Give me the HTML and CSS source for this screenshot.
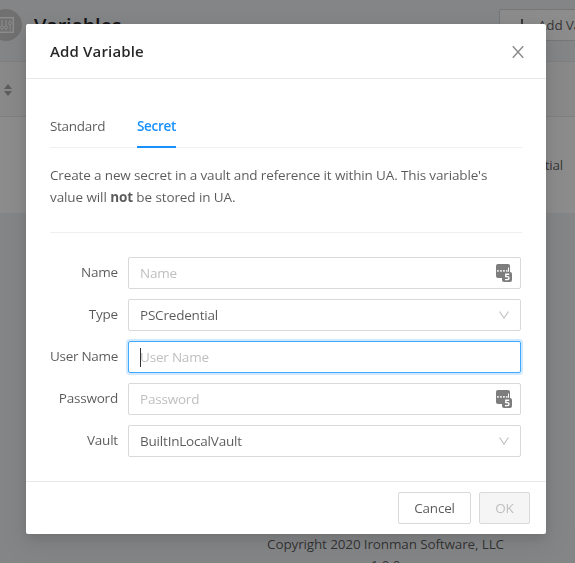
FILE: index.html
```html
<!DOCTYPE html>
<html lang="en">
<head>
<meta charset="utf-8">
<title>Variables</title>
<link rel="stylesheet" href="styles.css">
</head>
<body>
<div class="page">
  <header class="page-header">
    <div class="page-title">
      <span class="avatar"><svg width="18" height="18" viewBox="0 0 18 18" fill="none" stroke="currentColor"><rect x="1.7" y="1.7" width="14.6" height="14.6" stroke-width="1.5"/><path d="M5 4v5.5M5 13v1.5M9 4v5.5M9 13v1.5M13 4v1.5M13 9v5.5"/><circle cx="5" cy="11.3" r="1.5"/><circle cx="9" cy="11.3" r="1.5"/><circle cx="13" cy="7.3" r="1.5"/></svg></span>
      <h1>Variables</h1>
    </div>
    <button class="add-button"><svg width="14" height="14" viewBox="0 0 14 14" stroke="currentColor" stroke-width="1.8"><path d="M7 1v12M1 7h12"/></svg><span>Add Variable</span></button>
  </header>
  <div class="table-head"><svg width="8" height="12" viewBox="0 0 8 12" fill="currentColor"><path d="M4 0l4 5H0zM4 12l4-5H0z"/></svg></div>
  <div class="table-row"><span>PSCredential</span></div>
  <footer class="page-footer"><div>Copyright 2020 Ironman Software, LLC</div><div class="version">1.0.0</div></footer>
</div>
<div class="mask">
  <section class="modal" role="dialog" aria-label="Add Variable">
    <header class="modal-header">
      <h2>Add Variable</h2>
      <svg class="close" width="12" height="12" viewBox="0 0 12 12" fill="none" stroke="currentColor" stroke-width="1.4"><path d="M.8.2l10.4 11.6M11.2.2L.8 11.8"/></svg>
    </header>
    <div class="modal-body">
      <nav class="tabs"><span class="tab standard">Standard</span><span class="tab active">Secret</span></nav>
      <p class="description"><span class="first">Create a new secret in a vault and reference it within UA. This variable's</span><br><span class="second">value will <strong>not</strong> be stored in UA.</span></p>
      <form class="form">
        <label>Name</label>
        <div class="field placeholder"><span>Name</span><svg class="keys" width="16" height="18" viewBox="0 0 16 18"><rect width="14" height="14" rx="2" fill="#7d7d7d"/><path d="M1.2 6h1.5v1.8H1.2zM4.2 6h1.5v1.8H4.2zM7.2 6h1.5v1.8H7.2zM10.2 6h1.3v1.8h-1.3zM12 3.5h1v4.3h-1z" fill="#fff"/><rect x="6" y="8" width="10" height="10" rx="2" fill="#7d7d7d"/><path d="M13.2 10.3H9.8v2.3h1.7c2 0 2 3 0 3H9" fill="none" stroke="#fff" stroke-width="1.4"/></svg></div>
        <label>Type</label>
        <div class="field"><span>PSCredential</span><svg class="arrow" width="10" height="8" viewBox="0 0 10 8" fill="none" stroke="currentColor" stroke-width="1.1"><path d="M.5.5L5 7 9.5.5"/></svg></div>
        <label class="user">User Name</label>
        <div class="field placeholder focused"><i class="caret"></i><span>User Name</span></div>
        <label>Password</label>
        <div class="field placeholder"><span>Password</span><svg class="keys" width="16" height="18" viewBox="0 0 16 18"><rect width="14" height="14" rx="2" fill="#7d7d7d"/><path d="M1.2 6h1.5v1.8H1.2zM4.2 6h1.5v1.8H4.2zM7.2 6h1.5v1.8H7.2zM10.2 6h1.3v1.8h-1.3zM12 3.5h1v4.3h-1z" fill="#fff"/><rect x="6" y="8" width="10" height="10" rx="2" fill="#7d7d7d"/><path d="M13.2 10.3H9.8v2.3h1.7c2 0 2 3 0 3H9" fill="none" stroke="#fff" stroke-width="1.4"/></svg></div>
        <label>Vault</label>
        <div class="field"><span>BuiltInLocalVault</span><svg class="arrow" width="10" height="8" viewBox="0 0 10 8" fill="none" stroke="currentColor" stroke-width="1.1"><path d="M.5.5L5 7 9.5.5"/></svg></div>
      </form>
    </div>
    <footer class="modal-footer"><button class="button">Cancel</button><button class="button disabled" disabled>OK</button></footer>
  </section>
</div>
</body>
</html>
```
FILE: styles.css
```css
* { box-sizing: border-box; }
body {
  margin: 0;
  overflow: hidden;
  font: 13.5px/22px "Open Sans", "Noto Sans", sans-serif;
  letter-spacing: -0.2px;
  color: rgba(0, 0, 0, 0.65);
}
h1, h2, p { margin: 0; }
button { font: inherit; letter-spacing: inherit; }
svg { display: block; flex: none; }
.page { height: 563px; background: #f0f2f5; overflow: hidden; }
.page-header {
  display: flex;
  justify-content: space-between;
  height: 62px;
  padding-top: 9px;
  border-bottom: 1px solid #e8e8e8;
}
.page-title { display: flex; gap: 12px; margin-left: -10px; }
.avatar {
  display: flex;
  align-items: center;
  justify-content: center;
  width: 32px;
  height: 32px;
  border-radius: 50%;
  background: #ccc;
  color: #fff;
}
.page-title h1 { font-size: 20px; line-height: 34px; font-weight: 600; color: rgba(0, 0, 0, 0.85); }
.add-button {
  display: flex;
  align-items: center;
  gap: 9px;
  flex: none;
  width: 140px;
  height: 32px;
  margin-right: -64px;
  padding: 0 15px;
  border: 1px solid #d9d9d9;
  border-radius: 2px;
  background: #fff;
  color: rgba(0, 0, 0, 0.65);
  white-space: nowrap;
}
.table-head {
  display: flex;
  align-items: center;
  height: 55px;
  padding: 2px 0 0 3.5px;
  background: #fafafa;
  border-bottom: 1px solid #e8e8e8;
  color: #aaa;
}
.table-row {
  display: flex;
  align-items: center;
  justify-content: flex-end;
  height: 96px;
  padding-right: 12px;
  background: #fff;
}
.page-footer {
  width: 237px;
  margin: 320px 0 0 267px;
  text-align: center;
  letter-spacing: -0.14px;
  white-space: nowrap;
}
.version { line-height: 20px; }
.mask {
  position: fixed;
  inset: 0;
  padding: 24px 29px 0 26px;
  background: rgba(0, 0, 0, 0.45);
}
.modal {
  display: flex;
  flex-direction: column;
  width: 520px;
  height: 510px;
  border-radius: 2px;
  background: #fff;
  box-shadow: 0 4px 12px rgba(0, 0, 0, 0.12), 0 9px 28px 8px rgba(0, 0, 0, 0.06);
}
.modal-header {
  display: flex;
  align-items: center;
  justify-content: space-between;
  height: 55px;
  padding: 0 22px 0 24px;
  border-bottom: 1px solid #e8e8e8;
}
.modal-header h2 { font-size: 15px; font-weight: 550; letter-spacing: 0.15px; color: rgba(0, 0, 0, 0.85); }
.close { margin-top: 1px; color: #8c8c8c; }
.modal-body { flex: 1; padding: 24px 25px 0 24px; }
.tabs { display: flex; gap: 32px; width: 472px; height: 45px; border-bottom: 1px solid #f0f0f0; }
.tab { height: 45px; line-height: 46px; }
.standard { width: 55px; letter-spacing: -0.3px; }
.active { width: 39px; font-weight: 600; letter-spacing: -0.3px; color: #1890ff; border-bottom: 2px solid #1890ff; }
.description {
  width: 472px;
  height: 85px;
  padding-top: 16px;
  border-bottom: 1px solid #f0f0f0;
  white-space: nowrap;
}
.first { letter-spacing: -0.14px; }
.second { letter-spacing: -0.1px; }
.form { display: grid; grid-template-columns: 68px 393px; gap: 10px; padding-top: 24px; white-space: nowrap; }
.form label { line-height: 31px; text-align: right; }
.form .user { letter-spacing: -0.3px; }
.field {
  display: flex;
  align-items: center;
  justify-content: space-between;
  height: 32px;
  padding: 0 11px;
  border: 1px solid #d9d9d9;
  border-radius: 2px;
}
.placeholder { color: #bfbfbf; }
.focused { justify-content: flex-start; border-color: #40a9ff; box-shadow: 0 0 0 2px rgba(24, 144, 255, 0.2); }
.caret { width: 1px; height: 19px; margin-right: -1px; background: #333; }
.keys { margin-right: -3px; }
.arrow { color: #bfbfbf; }
.modal-footer {
  display: flex;
  justify-content: flex-end;
  gap: 8px;
  height: 53px;
  padding: 10px 16px;
  border-top: 1px solid #e8e8e8;
}
.button {
  width: 73px;
  height: 32px;
  padding: 0;
  border: 1px solid #d9d9d9;
  border-radius: 2px;
  background: #fff;
  color: rgba(0, 0, 0, 0.65);
}
.disabled { width: 51px; background: #f5f5f5; color: #bfbfbf; }
```
